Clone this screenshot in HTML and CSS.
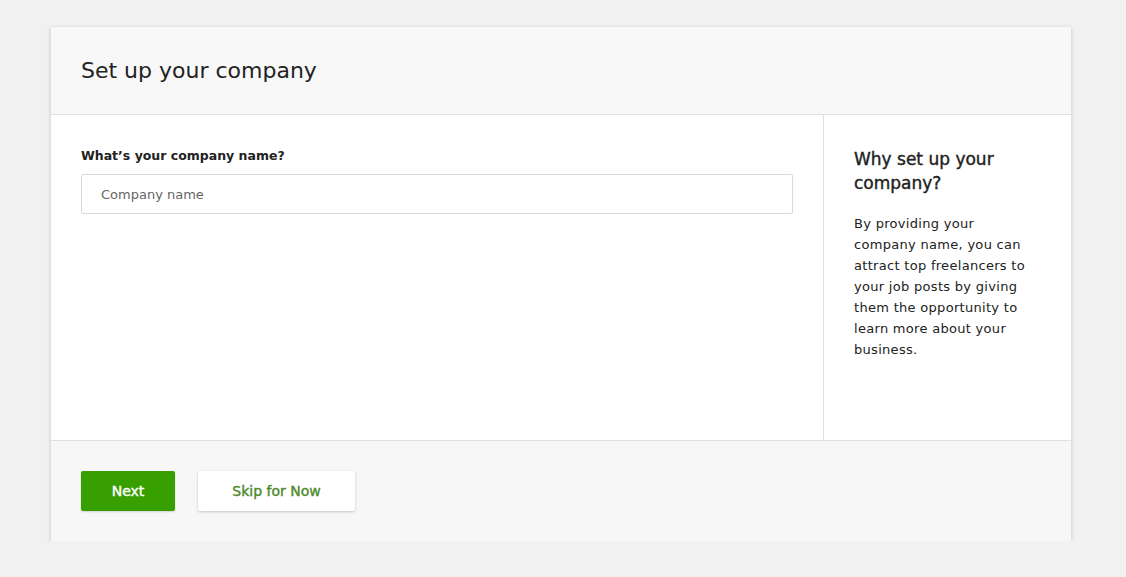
FILE: index.html
```html
<!DOCTYPE html>
<html>
<head>
<meta charset="utf-8">
<link rel="stylesheet" href="styles.css">
</head>
<body>
<div class="card">
  <div class="header"><h1 class="title">Set up your company</h1></div>
  <div class="body">
    <div class="main">
      <label class="label">What’s your company name?</label>
      <input class="input" type="text" placeholder="Company name">
    </div>
    <div class="side">
      <h2 class="side-title">Why set up your company?</h2>
      <p class="side-text">By providing your<br>company name, you can<br>attract top freelancers to<br>your job posts by giving<br>them the opportunity to<br>learn more about your<br>business.</p>
    </div>
  </div>
  <div class="footer">
    <button class="btn btn-primary">Next</button>
    <button class="btn btn-secondary">Skip for Now</button>
  </div>
</div>
</body>
</html>
```
FILE: styles.css
```css
html, body { margin: 0; padding: 0; }
body {
  background: #f1f1f1;
  font-family: "DejaVu Sans", "Open Sans", sans-serif;
  color: #222;
  padding: 27px 55px 0 51px;
}
.card {
  width: 1020px;
  background: #fff;
  box-shadow: 0 1px 4px rgba(0,0,0,0.2);
}
.header {
  height: 87px;
  background: #f8f8f8;
  border-bottom: 1px solid #e0e0e0;
  display: flex;
  align-items: center;
  padding-left: 30px;
}
.title {
  margin: 0;
  font-size: 22px;
  font-weight: normal;
  color: #222;
  letter-spacing: 0;
}
.body {
  display: flex;
  height: 325px;
}
.main {
  flex: 1;
  padding: 33px 30px 0 30px;
  border-right: 1px solid #e0e0e0;
}
.label {
  display: block;
  font-size: 12.5px;
  font-weight: bold;
  color: #222;
  margin-bottom: 11px;
}
.input {
  box-sizing: border-box;
  width: 100%;
  height: 40px;
  border: 1px solid #dadada;
  border-radius: 2px;
  padding: 0 19px;
  font-family: inherit;
  font-size: 13px;
  color: #222;
  outline: none;
}
.input::placeholder { color: #666; }
.side {
  width: 247px;
  box-sizing: border-box;
  padding: 32px 20px 0 30px;
}
.side-title {
  margin: 0 0 18px 0;
  font-size: 17px;
  font-weight: normal;
  line-height: 24px;
  color: #222;
  -webkit-text-stroke: 0.4px #222;
}
.side-text {
  margin: 0;
  font-size: 13px;
  line-height: 21px;
  color: #222;
  letter-spacing: 0.3px;
  white-space: nowrap;
}
.footer {
  height: 101px;
  background: #f7f7f7;
  border-top: 1px solid #e0e0e0;
  box-sizing: border-box;
  padding: 30px;
  display: flex;
  gap: 23px;
}
.btn {
  height: 40px;
  border-radius: 2px;
  font-family: inherit;
  font-size: 14px;
  font-weight: normal;
  -webkit-text-stroke: 0.4px currentColor;
  cursor: pointer;
}
.btn-primary {
  width: 94px;
  background: #37a000;
  color: #fff;
  border: none;
  box-shadow: 0 1px 2px rgba(0,0,0,0.15);
}
.btn-secondary {
  width: 157px;
  background: #fff;
  color: #4d8a2c;
  border: none;
  box-shadow: 0 1px 3px rgba(0,0,0,0.2);
}
```
